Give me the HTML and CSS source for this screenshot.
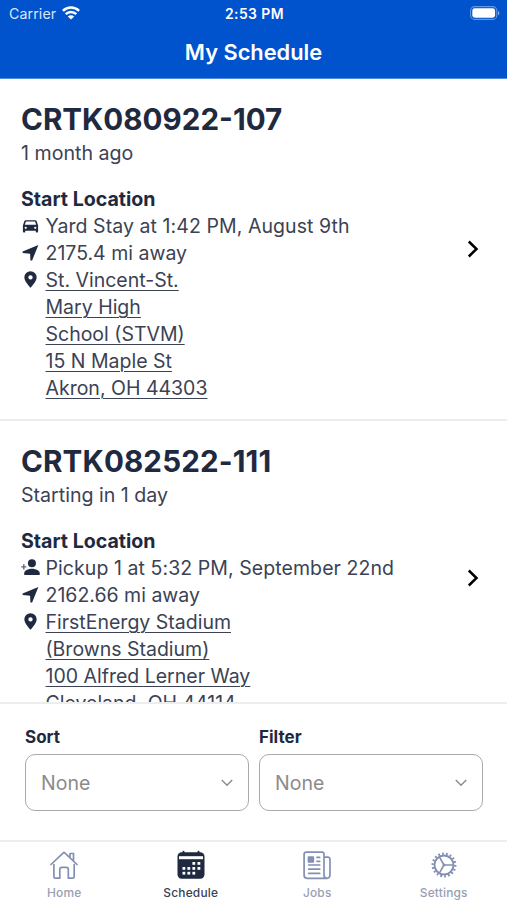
FILE: index.html
```html
<!DOCTYPE html>
<html lang="en">
<head>
<meta charset="utf-8">
<title>My Schedule</title>
<link rel="stylesheet" href="styles.css">
</head>
<body>
<div class="app">
  <header class="header">
    <div class="status">
      <div class="carrier"><span class="carrier-name">Carrier</span>
        <svg class="wifi" viewBox="0 0 18 14" fill="none" stroke="#fff" stroke-width="2.5"><path d="M.9 4.900a11.600 11.600 0 0 1 16.200 0M3.700 8.200a7.600 7.600 0 0 1 10.600 0"/><path d="M9 13.500 5.800 10.500a4.600 4.600 0 0 1 6.400 0z" fill="#fff" stroke="none"/></svg>
      </div>
      <div class="clock">2:53 PM</div>
      <div class="power">
        <svg class="battery" viewBox="0 0 30 14"><rect x=".6" y=".6" width="26.200" height="12.800" rx="4" fill="none" stroke="#fff" stroke-opacity=".4" stroke-width="1.100"/><rect x="2.300" y="2.300" width="22.800" height="9.400" rx="2.400" fill="#fff"/><path d="M28 4.700c1.900.8 1.900 3.800 0 4.600z" fill="#fff" fill-opacity=".5"/></svg>
      </div>
    </div>
    <h1 class="heading">My Schedule</h1>
  </header>

  <main class="list">
    <article class="card">
      <div class="details">
        <h2 class="job">CRTK080922-107</h2>
        <p class="when">1 month ago</p>
        <h3 class="label">Start Location</h3>
        <div class="row"><svg class="icon" viewBox="0 0 20 20"><path fill="#1f2940" fill-rule="evenodd" d="M5 4.400h10c.8 0 1.300.4 1.500 1.100L18 10v6.400c0 .6-.3.9-.8.9h-.9c-.5 0-.8-.3-.8-.9v-.9h-11v.9c0 .6-.3.9-.8.9h-.9c-.5 0-.8-.3-.8-.9V10l1.500-4.500C3.700 4.800 4.200 4.400 5 4.400zM5.200 5.800 4 9.300h12l-1.200-3.500zM5 11.200a1.200 1.200 0 1 0 0 2.400 1.200 1.200 0 0 0 0-2.400zm10 0a1.200 1.200 0 1 0 0 2.400 1.200 1.200 0 0 0 0-2.400z"/></svg><span class="stay">Yard Stay at 1:42 PM, August 9th</span></div>
        <div class="row"><svg class="icon" viewBox="0 0 20 20"><path fill="#1f2940" d="M18.300 2.200 11.700 18.300 9.900 18.300 9.600 11.200 1.700 10.400V8.900z"/></svg><span class="miles">2175.4 mi away</span></div>
        <div class="row"><svg class="icon" viewBox="0 0 20 20"><path fill="#1f2940" fill-rule="evenodd" d="M10 1.200a6.500 6.500 0 0 0-6.500 6.500c0 4.500 6.500 11 6.500 11s6.500-6.500 6.500-11A6.500 6.500 0 0 0 10 1.200zm0 4.200a2.300 2.300 0 1 1 0 4.600 2.300 2.300 0 0 1 0-4.600z"/></svg><a class="address">St. Vincent-St.<br>Mary High<br>School (STVM)<br>15 N Maple St<br>Akron, OH 44303</a></div>
      </div>
      <svg class="chevron" viewBox="0 0 12 18"><path d="m1.800 1.500 7.700 7.500-7.700 7.500" fill="none" stroke="#000" stroke-width="2.500"/></svg>
    </article>

    <article class="card card-next">
      <div class="details">
        <h2 class="job job-next">CRTK082522-111</h2>
        <p class="when">Starting in 1 day</p>
        <h3 class="label">Start Location</h3>
        <div class="row"><svg class="icon" viewBox="0 0 20 20"><g fill="#1f2940"><circle cx="11.500" cy="5.500" r="4.200"/><path d="M3.400 18v-2.300c0-2.900 4.900-4.500 8.100-4.500s8.200 1.600 8.200 4.500V18z"/><path d="M2.200 6.700h1.500v1.900h1.900v1.500H3.700V12H2.200v-1.900H.3V8.600h1.900z" opacity=".7"/></g></svg><span class="stay">Pickup 1 at 5:32 PM, September 22nd</span></div>
        <div class="row"><svg class="icon" viewBox="0 0 20 20"><path fill="#1f2940" d="M18.300 2.200 11.700 18.300 9.900 18.300 9.600 11.200 1.700 10.400V8.900z"/></svg><span class="miles">2162.66 mi away</span></div>
        <div class="row"><svg class="icon" viewBox="0 0 20 20"><path fill="#1f2940" fill-rule="evenodd" d="M10 1.200a6.500 6.500 0 0 0-6.500 6.500c0 4.500 6.500 11 6.500 11s6.500-6.500 6.500-11A6.500 6.500 0 0 0 10 1.200zm0 4.200a2.300 2.300 0 1 1 0 4.600 2.300 2.300 0 0 1 0-4.600z"/></svg><a class="address">FirstEnergy Stadium<br>(Browns Stadium)<br>100 Alfred Lerner Way<br>Cleveland, OH 44114</a></div>
      </div>
      <svg class="chevron" viewBox="0 0 12 18"><path d="m1.800 1.500 7.700 7.500-7.700 7.500" fill="none" stroke="#000" stroke-width="2.500"/></svg>
    </article>
  </main>

  <section class="controls">
    <div class="field"><div class="field-label">Sort</div><div class="select"><span>None</span><svg class="caret" viewBox="0 0 12 8"><path d="m.8 1 5.200 5.200L11.200 1" fill="none" stroke="#8b8b8b" stroke-width="1.400"/></svg></div></div>
    <div class="field"><div class="field-label">Filter</div><div class="select"><span>None</span><svg class="caret" viewBox="0 0 12 8"><path d="m.8 1 5.200 5.200L11.200 1" fill="none" stroke="#8b8b8b" stroke-width="1.400"/></svg></div></div>
  </section>

  <nav class="tabs">
    <div class="tab"><svg class="tab-icon" viewBox="0 0 30 30" fill="none" stroke="#8490b3" stroke-width="1.700" stroke-linejoin="round" stroke-linecap="round"><path d="M4.900 14.500v12.300c0 .9.500 1.400 1.400 1.400h4.500v-9c0-1.200.6-1.800 1.800-1.800h4.900c1.200 0 1.800.6 1.800 1.800v9h4.500c.9 0 1.400-.5 1.400-1.400V14.500M2 14.500 14.300 2.900c.5-.5 1-.5 1.500 0L28 14.500M21 7V3.500h3.500v7"/></svg><span>Home</span></div>
    <div class="tab active"><svg class="tab-icon" viewBox="0 0 30 30"><rect x="1.500" y="2.300" width="27" height="26.400" rx="4.200" fill="#1f2940"/><path d="M3 6.200h24v3H3z" fill="#fff"/><path d="M7.500 1.800v2M22.500 1.800v2" stroke="#1f2940" stroke-width="2" stroke-linecap="round"/><g fill="#fff"><rect x="16.400" y="12" width="2.800" height="2.800"/><rect x="21.500" y="12" width="2.800" height="2.800"/><rect x="6.500" y="17" width="2.800" height="2.800"/><rect x="11.400" y="17" width="2.800" height="2.800"/><rect x="16.400" y="17" width="2.800" height="2.800"/><rect x="21.500" y="17" width="2.800" height="2.800"/><rect x="6.500" y="21.800" width="2.800" height="2.800"/><rect x="11.400" y="21.800" width="2.800" height="2.800"/><rect x="16.400" y="21.800" width="2.800" height="2.800"/></g></svg><span>Schedule</span></div>
    <div class="tab"><svg class="tab-icon" viewBox="0 0 30 30" fill="none" stroke="#8490b3" stroke-width="1.700" stroke-linejoin="round" stroke-linecap="round"><path d="M22 25.300V4.200c0-1.200-.9-2.100-2.100-2.100H4.200c-1.200 0-2.100.9-2.100 2.100v21.100a3 3 0 0 0 3 3H25a3 3 0 0 0 3-3V9.300C28 8 27.200 7.200 26 7.200h-4M22 25.300a3 3 0 0 0 3 3M6.700 15h11M6.700 19.200h11M6.700 23.400h11M15 7.400h2.700M15 11.300h2.700"/><rect x="6.500" y="7" width="4.800" height="4.800" fill="#8490b3"/></svg><span>Jobs</span></div>
    <div class="tab"><svg class="tab-icon" viewBox="0 0 30 30" fill="none" stroke="#8490b3"><circle cx="15" cy="15" r="9.500" stroke-width="1.900"/><circle cx="15" cy="15" r="11.300" stroke-width="2.300" pathLength="180" stroke-dasharray="4.500 5.500"/><path d="M15 15h9.500M15 15l-4.800-8.300M15 15l-4.800 8.300" stroke-width="1.600"/><circle cx="15" cy="15" r="1" fill="#8490b3"/></svg><span>Settings</span></div>
  </nav>
</div>
</body>
</html>
```
FILE: styles.css
```css
* { box-sizing: border-box; }
body {
  margin: 0;
  background: #fff;
  color: #3b4254;
  font-family: Inter, "Liberation Sans", sans-serif;
}
h1, h2, h3, p { margin: 0; }
svg { display: block; flex: none; }
.app {
  display: flex;
  flex-direction: column;
  height: 900px;
  overflow: hidden;
}
.header {
  flex: none;
  height: 79px;
  background: #0053cd;
  border-bottom: 1px solid #4c8de0;
  color: #fff;
}
.status {
  display: grid;
  grid-template-columns: 1fr auto 1fr;
  align-items: center;
  height: 27px;
  padding: 0 7px 0 9px;
}
.carrier { display: flex; align-items: center; gap: 6px; }
.carrier-name { font-size: 14.2px; color: #d9e7fb; letter-spacing: 0.1px; }
.wifi { width: 18px; height: 14px; margin-top: -2px; }
.clock { font-size: 13.9px; font-weight: 600; letter-spacing: 0.45px; }
.power { display: flex; justify-content: flex-end; }
.battery { width: 30px; height: 14px; margin-top: -1px; }
.heading {
  font-size: 21.8px;
  font-weight: 600;
  line-height: 26px;
  padding-top: 12px;
  text-align: center;
}
.list { flex: none; height: 623px; overflow: hidden; }
.card {
  display: flex;
  align-items: center;
  justify-content: space-between;
  height: 342px;
  padding: 0 28px 0 21px;
  border-bottom: 2px solid #ededee;
}
.card-next { height: 316px; }
.details { align-self: flex-start; padding-top: 22px; }
.card-next .details { height: 314px; }
.job {
  font-size: 29.6px;
  line-height: 36px;
  font-weight: 700;
  color: #1f2940;
}
.job-next { letter-spacing: 0.13px; }
.when { font-size: 19.6px; line-height: 27px; margin: 3px 0 19px; }
.label { font-size: 19.6px; line-height: 27px; font-weight: 700; color: #1f2940; }
.row { display: flex; font-size: 19.5px; line-height: 26.95px; }
.stay { letter-spacing: 0.07px; }
.icon { width: 19px; height: 19px; margin: 3px 5.5px 0 0; }
.address {
  text-decoration: underline;
  text-decoration-thickness: 1.3px;
  text-underline-offset: 2.5px;
}
.chevron { width: 12px; height: 18px; }
.controls {
  flex: none;
  display: flex;
  gap: 10px;
  height: 138px;
  padding: 22px 24px 0 25px;
  border-top: 2px solid #ededee;
}
.field { flex: 1; }
.field-label { font-size: 17px; line-height: 22px; font-weight: 700; color: #1f2940; }
.select {
  display: flex;
  align-items: center;
  justify-content: space-between;
  height: 57px;
  margin-top: 6px;
  padding: 0 15px;
  border: 1.3px solid #aaa;
  border-radius: 10px;
  font-size: 19.5px;
  color: #8b8b8b;
}
.caret { width: 12px; height: 8px; }
.tabs {
  flex: none;
  display: flex;
  height: 60px;
  padding-left: 1px;
  border-top: 2px solid #ededee;
}
.tab {
  flex: 1;
  display: flex;
  flex-direction: column;
  align-items: center;
  padding-top: 8px;
  font-size: 11.9px;
  line-height: 16px;
  font-weight: 500;
  letter-spacing: 0.2px;
  color: #979eb4;
}
.tab-icon { width: 30px; height: 30px; margin-bottom: 5px; }
.active { color: #3b4254; }
```
